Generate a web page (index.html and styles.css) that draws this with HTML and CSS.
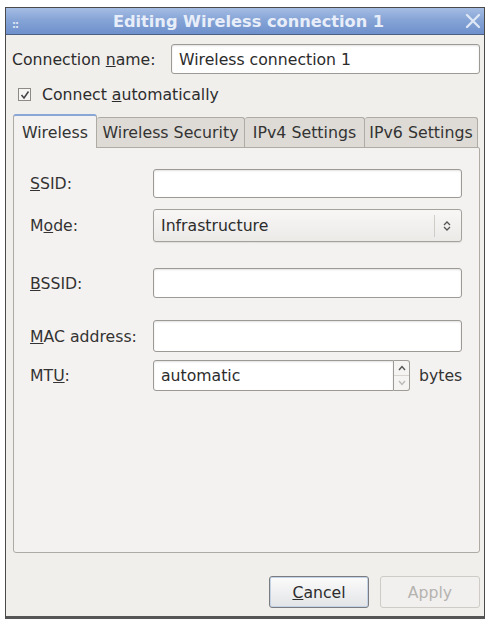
FILE: index.html
```html
<!DOCTYPE html>
<html>
<head>
<meta charset="utf-8">
<link rel="stylesheet" href="styles.css">
</head>
<body>
<div class="window">
  <div class="titlebar">
    <span class="grip">::</span>
    <span class="title">Editing Wireless connection 1</span>
    <svg class="close" width="16" height="16" viewBox="0 0 16 16"><path d="M2 2 L14 14 M14 2 L2 14" stroke="#dde7f5" stroke-width="2.4" stroke-linecap="round"/></svg>
  </div>
  <div class="content">
    <div class="name-row">
      <span class="label">Connection <u>n</u>ame:</span>
      <div class="entry name-entry">Wireless connection 1</div>
    </div>
    <div class="check-row">
      <span class="checkbox"><svg width="10" height="10" viewBox="0 0 10 10"><path d="M1.5 5 L4 8 L8.5 1.5" fill="none" stroke="#444" stroke-width="1.5"/></svg></span>
      <span class="label">Connect <u>a</u>utomatically</span>
    </div>
    <div class="tabs">
      <div class="tab active">Wireless</div>
      <div class="tab t2">Wireless Security</div>
      <div class="tab t3">IPv4 Settings</div>
      <div class="tab t4">IPv6 Settings</div>
    </div>
    <div class="panel">
      <div class="row r-ssid">
        <span class="flabel"><u>S</u>SID:</span>
        <div class="entry field"></div>
      </div>
      <div class="row r-mode">
        <span class="flabel">M<u>o</u>de:</span>
        <div class="combo field">
          <span class="combo-text">Infrastructure</span>
          <span class="combo-sep"></span>
          <svg class="combo-arrow" width="8" height="12" viewBox="0 0 8 12"><path d="M1 5 L4 2 L7 5 M1 7 L4 10 L7 7" fill="none" stroke="#555" stroke-width="1.3"/></svg>
        </div>
      </div>
      <div class="row r-bssid">
        <span class="flabel"><u>B</u>SSID:</span>
        <div class="entry field"></div>
      </div>
      <div class="row r-mac">
        <span class="flabel"><u>M</u>AC address:</span>
        <div class="entry field"></div>
      </div>
      <div class="row r-mtu">
        <span class="flabel">MT<u>U</u>:</span>
        <div class="spin">
          <div class="entry spin-entry">automatic</div>
          <div class="spin-btns">
            <span class="sb up"><svg width="8" height="6" viewBox="0 0 8 6"><path d="M1 5 L4 1.5 L7 5" fill="none" stroke="#555" stroke-width="1.4"/></svg></span>
            <span class="sb down"><svg width="8" height="6" viewBox="0 0 8 6"><path d="M1 1 L4 4.5 L7 1" fill="none" stroke="#bbb" stroke-width="1.4"/></svg></span>
          </div>
        </div>
        <span class="unit">bytes</span>
      </div>
    </div>
    <div class="buttons">
      <div class="btn cancel"><u>C</u>ancel</div>
      <div class="btn apply">Apply</div>
    </div>
  </div>
</div>
</body>
</html>
```
FILE: styles.css
```css
html, body {
  margin: 0;
  padding: 0;
  background: #ffffff;
}
body {
  font-family: "DejaVu Sans", "Liberation Sans", sans-serif;
  font-size: 15.7px;
  color: #2c2c2c;
}
.window {
  margin: 7px 0 0 5px;
  width: 480px;
  height: 612px;
  box-sizing: border-box;
  border: 1px solid #4a4a4a;
  border-bottom: 3px solid #555;
  background: #f1efec;
  display: flex;
  flex-direction: column;
}
.titlebar {
  height: 26px;
  background: linear-gradient(#a5bde3, #86a4d6 45%, #6e90cc);
  border-bottom: 1px solid #4d5f80;
  display: flex;
  align-items: center;
  color: #e8eef9;
}
.grip {
  font-size: 10px;
  font-weight: bold;
  color: #dfe7f4;
  margin-left: 6px;
  margin-top: 6px;
  letter-spacing: -1px;
}
.title {
  flex: 1;
  text-align: center;
  font-weight: bold;
  font-size: 16.2px;
  margin-left: 14px;
}
.close {
  margin-right: 3px;
}
.content {
  flex: 1;
  display: flex;
  flex-direction: column;
  padding: 0 4px 0 6px;
}
.name-row {
  display: flex;
  align-items: center;
  margin-top: 9px;
  height: 30px;
}
.name-row .label {
  width: 159px;
  flex-shrink: 0;
}
.entry {
  background: #ffffff;
  border: 1px solid #9d9a95;
  border-radius: 3px;
  box-shadow: inset 0 1px 2px rgba(0,0,0,0.12);
  box-sizing: border-box;
  display: flex;
  align-items: center;
  padding-left: 7px;
}
.name-entry {
  flex: 1;
  height: 30px;
}
.check-row {
  display: flex;
  align-items: center;
  margin-top: 7px;
  height: 27px;
  padding-left: 6px;
}
.checkbox {
  width: 11px;
  height: 11px;
  border: 1px solid #8e8b86;
  background: #f6f5f3;
  display: flex;
  align-items: center;
  justify-content: center;
  margin-right: 11px;
}
.tabs {
  display: flex;
  align-items: flex-end;
  margin-top: 6px;
  height: 33px;
  padding-left: 1px;
  position: relative;
  z-index: 1;
}
.tab {
  height: 30px;
  box-sizing: border-box;
  display: flex;
  align-items: center;
  justify-content: center;
  background: #dedbd6;
  border: 1px solid #aeaaa4;
  border-bottom: none;
  border-left: none;
  border-radius: 3px 3px 0 0;
  font-size: 15.8px;
  color: #333;
  white-space: nowrap;
}
.tab.active {
  height: 34px;
  width: 84px;
  background: #f4f2f0;
  border-left: 1px solid #aeaaa4;
  border-top: 2px solid #88a6d6;
  margin-bottom: -1px;
}
.t2 { width: 148px; }
.t3 { width: 120px; }
.t4 { width: 113px; }
.panel {
  margin-left: 1px;
  height: 406px;
  box-sizing: border-box;
  border: 1px solid #aeaaa4;
  border-radius: 0 2px 3px 3px;
  background: #f4f2f0;
  padding: 21px 12px 0 16px;
  display: flex;
  flex-direction: column;
}
.row {
  display: flex;
  align-items: center;
}
.flabel {
  width: 123px;
  flex-shrink: 0;
  color: #333;
}
.field {
  width: 309px;
}
.r-ssid .entry { height: 29px; }
.r-mode { margin-top: 11px; }
.combo {
  height: 33px;
  box-sizing: border-box;
  border: 1px solid #a5a29d;
  border-radius: 3px;
  background: linear-gradient(#f8f7f6, #eceae7);
  box-shadow: 0 1px 1px rgba(0,0,0,0.08);
  display: flex;
  align-items: center;
  padding-left: 7px;
}
.combo-text { flex: 1; }
.combo-sep {
  width: 1px;
  height: 22px;
  background: #d0cdc8;
  margin-right: 8px;
}
.combo-arrow { margin-right: 10px; }
.r-bssid { margin-top: 26px; }
.r-bssid .entry { height: 30px; }
.r-mac { margin-top: 22px; }
.r-mac .entry { height: 32px; }
.r-mtu { margin-top: 8px; }
.spin {
  display: flex;
  width: 257px;
  height: 31px;
  flex-shrink: 0;
}
.spin-entry {
  flex: 1;
  height: 31px;
  border-radius: 3px 0 0 3px;
}
.spin-btns {
  width: 16px;
  display: flex;
  flex-direction: column;
  border: 1px solid #a09d98;
  border-left: none;
  border-radius: 0 3px 3px 0;
  box-sizing: border-box;
  background: #f5f4f2;
}
.sb {
  flex: 1;
  display: flex;
  align-items: center;
  justify-content: center;
}
.sb.up { border-bottom: 1px solid #d8d5d0; }
.unit {
  margin-left: 9px;
  color: #333;
}
.buttons {
  display: flex;
  justify-content: flex-end;
  margin-top: 23px;
  gap: 11px;
}
.btn {
  width: 100px;
  height: 32px;
  box-sizing: border-box;
  border-radius: 3px;
  display: flex;
  align-items: center;
  justify-content: center;
}
.cancel {
  border: 1px solid #7a7c80;
  background: linear-gradient(#fbfbfb, #e3e4e7);
  box-shadow: inset 0 0 0 1px #c4d2e6;
  color: #2c2c2c;
}
.apply {
  border: 1px solid #cfccc7;
  background: #f1f0ee;
  color: #b5b3b0;
}
```
